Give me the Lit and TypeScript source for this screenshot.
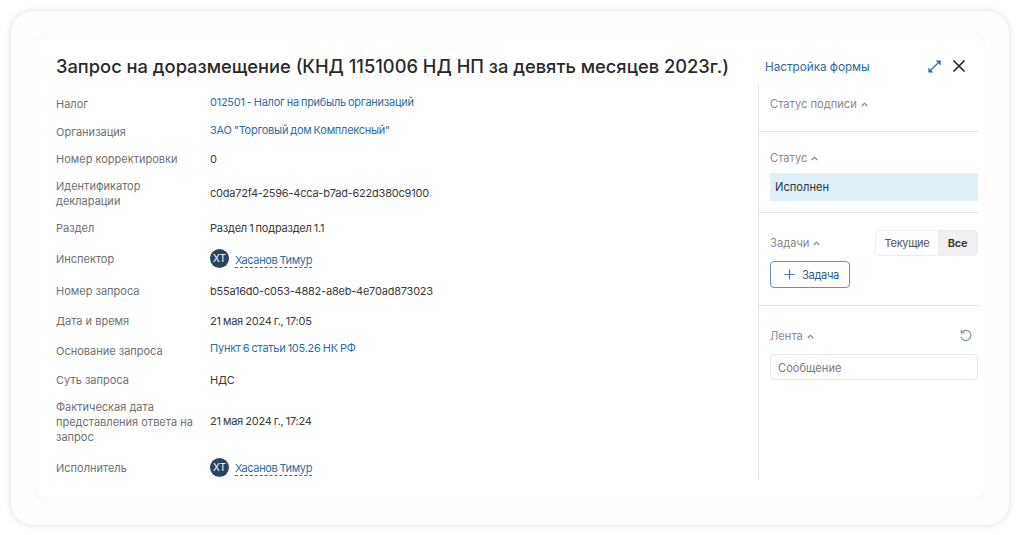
import { LitElement, html, css, svg } from "lit";
import { customElement } from "lit/decorators.js";

type Row = { label: string | string[]; cls: string; kind: "link" | "text" | "person"; value: string };

const rows: Row[] = [
  { label: "Налог", cls: "r-link", kind: "link", value: "012501 - Налог на прибыль организаций" },
  { label: "Организация", cls: "r-link g-11", kind: "link", value: 'ЗАО "Торговый дом Комплексный"' },
  { label: "Номер корректировки", cls: "", kind: "text", value: "0" },
  { label: ["Идентификатор", "декларации"], cls: "r-two", kind: "text", value: "c0da72f4-2596-4cca-b7ad-622d380c9100" },
  { label: "Раздел", cls: "", kind: "text", value: "Раздел 1 подраздел 1.1" },
  { label: "Инспектор", cls: "r-person g-13", kind: "person", value: "Хасанов Тимур" },
  { label: "Номер запроса", cls: "g-14", kind: "text", value: "b55a16d0-c053-4882-a8eb-4e70ad873023" },
  { label: "Дата и время", cls: "g-15", kind: "text", value: "21 мая 2024 г., 17:05" },
  { label: "Основание запроса", cls: "r-link r-base", kind: "link", value: "Пункт 6 статьи 105.26 НК РФ" },
  { label: "Суть запроса", cls: "g-13", kind: "text", value: "НДС" },
  { label: ["Фактическая дата", "представления ответа на", "запрос"], cls: "r-two", kind: "text", value: "21 мая 2024 г., 17:24" },
  { label: "Исполнитель", cls: "r-person g-13", kind: "person", value: "Хасанов Тимур" },
];

const caret = svg`<svg class="caret" width="7" height="5" viewBox="0 0 7 5" fill="none" stroke="#808080" stroke-width="1.1"><path d="M0.8 4 3.5 1.2 6.2 4"/></svg>`;

@customElement("app-root")
export class AppRoot extends LitElement {
  static styles = css`
    :host {
      display: block;
      width: 1020px;
      height: 535px;
      background: #fff;
      font-family: Inter, "Noto Sans", sans-serif;
      overflow: hidden;
    }
    .card {
      box-sizing: border-box;
      margin: 11px 11px 0 11px;
      width: 998px;
      height: 514px;
      padding: 24px;
      border-radius: 22px;
      background: #fefefe;
      box-shadow: 0 0 7px rgba(0, 0, 0, 0.13);
    }
    .panel {
      position: relative;
      box-sizing: border-box;
      width: 950px;
      height: 465px;
      border-radius: 10px;
      background: #fff;
      padding: 19px 6px 0 21px;
      display: flex;
      flex-direction: column;
    }
    .corner {
      position: absolute;
      width: 10px;
      height: 9px;
      border: 0 solid #f4f4f4;
    }
    .tl { left: 0; top: 0; border-top-width: 1px; border-left-width: 1px; border-top-left-radius: 10px; }
    .tr { right: 0; top: 0; border-top-width: 1px; border-right-width: 1px; border-top-right-radius: 10px; }
    .bl { left: 0; bottom: 0; border-bottom-width: 1px; border-left-width: 1px; border-bottom-left-radius: 10px; }
    .br { right: 0; bottom: 0; border-bottom-width: 1px; border-right-width: 1px; border-bottom-right-radius: 10px; }
    .head {
      display: flex;
      align-items: center;
      height: 24px;
    }
    h1 {
      margin: 0;
      width: 709px;
      flex: none;
      font-size: 18.31px;
      line-height: 24px;
      font-weight: 500;
      color: #2a2a2a;
      white-space: nowrap;
    }
    .config {
      font-size: 11.7px;
      color: #2a6a9e;
      font-weight: 400;
      width: 163px;
      flex: none;
      padding-top: 1px;
    }
    .head svg { flex: none; }
    .close { margin-left: 11px; }
    .body {
      display: flex;
      margin-top: 6px;
      height: 395px;
    }
    .fields {
      width: 702px;
      flex: none;
      padding-top: 11px;
      box-sizing: border-box;
    }
    .row {
      display: grid;
      grid-template-columns: 154px 1fr;
      align-items: center;
      font-size: 11px;
      line-height: 15px;
      margin-top: 12px;
    }
    .row:first-child { margin-top: 0; }
    .g-11 { margin-top: 11px; }
    .g-13 { margin-top: 13.5px; }
    .g-14 { margin-top: 14.5px; }
    .g-15 { margin-top: 15px; }
    .label { color: #707070; }
    .label div { white-space: nowrap; }
    .value {
      color: #3a3a3a;
      white-space: nowrap;
      letter-spacing: -0.22px;
      word-spacing: -0.7px;
    }
    .link { color: #2f6d9f; letter-spacing: -0.26px; }
    .r-link { align-items: start; }
    .r-link .label { padding-top: 2px; }
    .r-base .label { padding-top: 3px; }
    .r-two .value { margin-top: -1px; }
    .r-person { min-height: 20px; }
    .person { display: flex; align-items: center; gap: 6px; }
    .avatar {
      width: 19px;
      height: 19px;
      border-radius: 50%;
      background: #2c445e;
      color: #fff;
      font-size: 10px;
      line-height: 19px;
      text-align: center;
      letter-spacing: 0;
      margin-top: -2px;
    }
    .name {
      color: #2f6d9f;
      border-bottom: 1px dashed #2f6d9f;
      line-height: 13px;
      margin-top: 2px;
      letter-spacing: -0.36px;
    }
    .side {
      width: 221px;
      flex: none;
      border-left: 1px solid #e4e4e4;
      box-sizing: border-box;
      font-size: 11.15px;
    }
    .sec {
      box-sizing: border-box;
      border-bottom: 1px solid #e4e4e4;
      padding-left: 11px;
    }
    .sec.last { border-bottom: none; }
    .sign { height: 48px; padding-top: 12px; }
    .status { height: 81px; padding-top: 18px; }
    .tasks { height: 93px; padding-top: 17px; }
    .feed { padding-top: 22px; }
    .title {
      color: #8a8a8a;
      display: flex;
      align-items: center;
      gap: 4px;
      line-height: 16px;
      height: 16px;
    }
    .cell {
      margin-top: 7px;
      width: 208px;
      height: 28px;
      box-sizing: border-box;
      background: #dff0f9;
      color: #2b3640;
      padding: 0 5px;
      line-height: 28px;
    }
    .task-head {
      display: flex;
      align-items: center;
      justify-content: space-between;
      width: 208px;
    }
    .toggle {
      display: flex;
      width: 103px;
      height: 26px;
      border-radius: 4px;
      border: 1px solid #eee;
      box-sizing: border-box;
      line-height: 24px;
      overflow: hidden;
      color: #555;
      font-size: 11px;
    }
    .toggle span { text-align: center; }
    .toggle .cur { width: 62px; letter-spacing: -0.3px; }
    .toggle .all { flex: 1; background: #efefef; color: #333; font-weight: 600; letter-spacing: -0.3px; }
    .add {
      margin-top: 5px;
      width: 80px;
      height: 27px;
      box-sizing: border-box;
      border: 1px solid #5f93b8;
      border-radius: 4px;
      display: flex;
      align-items: center;
      padding-left: 13px;
      gap: 7px;
      color: #2f5d80;
      letter-spacing: -0.35px;
    }
    .feed-head {
      display: flex;
      align-items: center;
      justify-content: space-between;
      width: 208px;
      height: 16px;
      padding-right: 5px;
      box-sizing: border-box;
    }
    .input {
      margin-top: 10px;
      width: 208px;
      height: 26px;
      box-sizing: border-box;
      border: 1px solid #e6e6e6;
      border-radius: 4px;
      padding-left: 7px;
      line-height: 26px;
      color: #7c7c7c;
    }
  `;

  private renderValue(r: Row) {
    if (r.kind === "person") {
      return html`<div class="value person"><span class="avatar">ХТ</span><span class="name">${r.value}</span></div>`;
    }
    return html`<div class="value ${r.kind === "link" ? "link" : ""}">${r.value}</div>`;
  }

  render() {
    return html`
      <div class="card">
        <div class="panel">
          <span class="corner tl"></span><span class="corner tr"></span>
          <span class="corner bl"></span><span class="corner br"></span>
          <div class="head">
            <h1>Запрос на доразмещение (КНД 1151006 НД НП за девять месяцев 2023г.)</h1>
            <div class="config">Настройка формы</div>
            <svg width="13" height="13" viewBox="0 0 13 13" fill="none" stroke="#2a6a9e" stroke-width="1.1">
              <path d="M3 10 10 3"/>
              <path d="M7.6 0.4H12.6V5.4Z" fill="#2a6a9e" stroke="none"/>
              <path d="M0.4 7.6V12.6H5.4Z" fill="#2a6a9e" stroke="none"/>
            </svg>
            <svg class="close" width="14" height="14" viewBox="0 0 14 14" fill="none" stroke="#222" stroke-width="1.6">
              <path d="M1.5 1.5 12.5 12.5M12.5 1.5 1.5 12.5"/>
            </svg>
          </div>
          <div class="body">
            <div class="fields">
              ${rows.map(
                (r) => html`<div class="row ${r.cls}">
                  <div class="label">
                    ${Array.isArray(r.label) ? r.label.map((l) => html`<div>${l}</div>`) : r.label}
                  </div>
                  ${this.renderValue(r)}
                </div>`
              )}
            </div>
            <div class="side">
              <div class="sec sign"><div class="title">Статус подписи ${caret}</div></div>
              <div class="sec status">
                <div class="title">Статус ${caret}</div>
                <div class="cell">Исполнен</div>
              </div>
              <div class="sec tasks">
                <div class="task-head">
                  <div class="title">Задачи ${caret}</div>
                  <div class="toggle"><span class="cur">Текущие</span><span class="all">Все</span></div>
                </div>
                <div class="add">
                  <svg width="11" height="11" viewBox="0 0 11 11" fill="none" stroke="#3f7aa5" stroke-width="1.2"><path d="M5.5 0.5v10M0.5 5.5h10"/></svg>
                  <span>Задача</span>
                </div>
              </div>
              <div class="sec feed last">
                <div class="feed-head">
                  <div class="title">Лента ${caret}</div>
                  <svg width="14" height="14" viewBox="0 0 13 13" fill="none" stroke="#7e97a8" stroke-width="1.1">
                    <path d="M2.6 3.2A4.7 4.7 0 1 1 1.8 7"/>
                    <path d="M2.2 0.8v2.8h2.8"/>
                  </svg>
                </div>
                <div class="input">Сообщение</div>
              </div>
            </div>
          </div>
        </div>
      </div>
    `;
  }
}
